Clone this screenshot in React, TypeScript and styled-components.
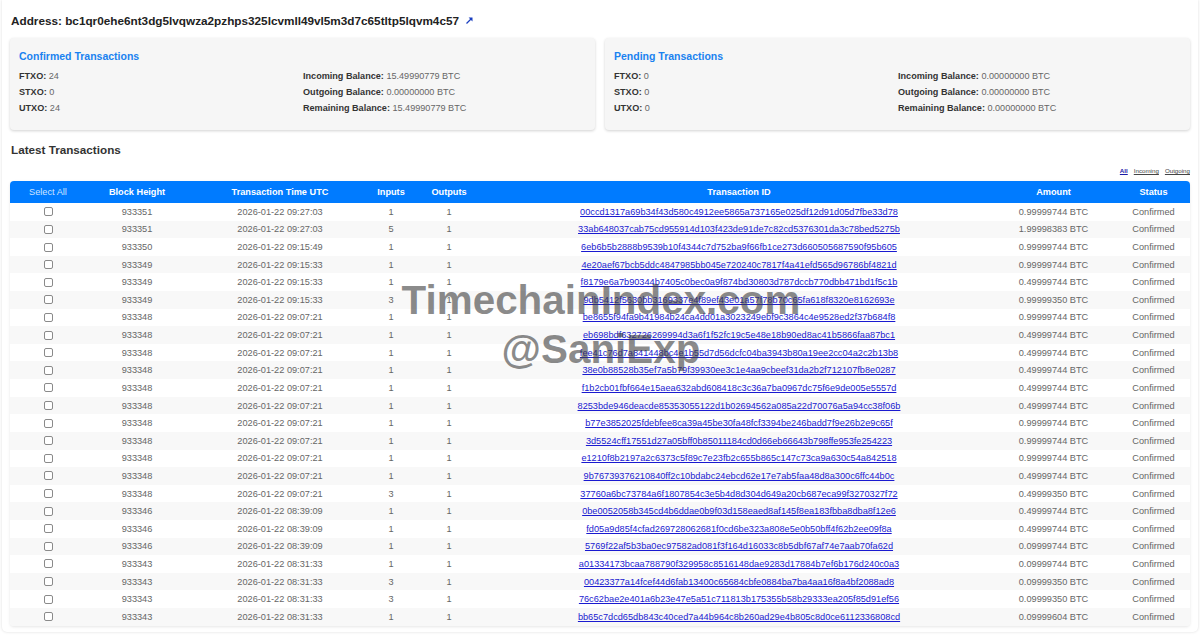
import styled, { createGlobalStyle } from "styled-components";

const GlobalStyle = createGlobalStyle`
  html, body {
    margin: 0;
    padding: 0;
    background: #ffffff;
    font-family: "Liberation Sans", Arial, sans-serif;
  }
`;

const Page = styled.div`
  position: relative;
  box-sizing: border-box;
  width: 1200px;
  height: 637px;
  padding: 0 2px;
  overflow: hidden;
`;

const Panel = styled.main`
  box-sizing: border-box;
  height: 632px;
  padding: 13px 8px 0;
  background: #ffffff;
  border-radius: 0 0 5px 5px;
  box-shadow: 0 0 3px rgba(0, 0, 0, 0.14);
`;

const AddressTitle = styled.h2`
  display: flex;
  align-items: center;
  gap: 6px;
  height: 14px;
  margin: 0 0 11px;
  padding-left: 1px;
  font-size: 11.75px;
  font-weight: 700;
  color: #222222;
`;

const Cards = styled.div`
  display: grid;
  grid-template-columns: 585px 585px;
  gap: 10px;
`;

const Card = styled.section`
  box-sizing: border-box;
  height: 92px;
  padding: 12px 9px;
  background: #f6f6f6;
  border-radius: 4px;
  box-shadow: 0 1px 3px rgba(0, 0, 0, 0.18);
`;

const CardTitle = styled.h3`
  margin: 0 0 5px;
  font-size: 10.5px;
  line-height: 13px;
  font-weight: 700;
  color: #1a82f0;
`;

const CardGrid = styled.div`
  display: grid;
  grid-template-columns: 284px 1fr;
  grid-auto-rows: 16px;
  align-items: center;
  font-size: 9.1px;
  color: #666666;

  b {
    color: #333333;
  }
`;

const SectionHead = styled.h2`
  margin: 13px 0 0 1px;
  font-size: 11.7px;
  line-height: 14px;
  font-weight: 700;
  color: #333333;
`;

const Filters = styled.div`
  display: flex;
  justify-content: flex-end;
  gap: 6px;
  height: 11px;
  margin-top: 8px;
  font-size: 6.2px;
  line-height: 11px;
`;

const FilterLink = styled.a<{ $active?: boolean }>`
  color: ${(props) => (props.$active ? "#1a1aa6" : "#444444")};
  font-weight: ${(props) => (props.$active ? 700 : 400)};
  text-decoration: underline;
`;

const TableBox = styled.div`
  width: 1180px;
  margin-top: 5px;
  border-radius: 4px;
  overflow: hidden;
  box-shadow: 0 1px 3px rgba(0, 0, 0, 0.1);
`;

const Table = styled.table`
  width: 100%;
  table-layout: fixed;
  border-collapse: separate;
  border-spacing: 0;
  font-size: 9.2px;
`;

const HeadCell = styled.th<{ $light?: boolean }>`
  height: 22px;
  padding: 0;
  background: #007bff;
  color: ${(props) => (props.$light ? "#cfe4ff" : "#ffffff")};
  font-weight: ${(props) => (props.$light ? 400 : 700)};
  text-align: center;
`;

const Row = styled.tr`
  &:nth-child(even) td {
    background: #f8f8f8;
  }
`;

const Cell = styled.td`
  height: 17.62px;
  padding: 0;
  text-align: center;
  color: #666666;
`;

const Check = styled.input`
  display: block;
  width: 9px;
  height: 9px;
  margin: 0 auto;
  appearance: none;
  background: #ffffff;
  border: 1px solid #8a8a8a;
  border-radius: 2px;
`;

const TxLink = styled.a`
  color: #1a1ad0;
  text-decoration: underline;
`;

const Watermark = styled.div`
  position: absolute;
  left: 401px;
  top: 276px;
  width: 400px;
  text-align: center;
  font-size: 40.4px;
  line-height: 49px;
  font-weight: 700;
  color: rgba(60, 60, 60, 0.6);
  pointer-events: none;
`;

const columns = [76, 102, 184, 38, 78, 502, 127, 73];

const rows: [string, string, number, string, string][] = [
  ["933351", "09:27:03", 1, "00ccd1317a69b34f43d580c4912ee5865a737165e025df12d91d05d7fbe33d78", "0.99999744"],
  ["933351", "09:27:03", 5, "33ab648037cab75cd955914d103f423de91de7c82cd5376301da3c78bed5275b", "1.99998383"],
  ["933350", "09:15:49", 1, "6eb6b5b2888b9539b10f4344c7d752ba9f66fb1ce273d660505687590f95b605", "0.99999744"],
  ["933349", "09:15:33", 1, "4e20aef67bcb5ddc4847985bb045e720240c7817f4a41efd565d96786bf4821d", "0.99999744"],
  ["933349", "09:15:33", 1, "f8179e6a7b90344b7405c0bec0a9f874bd30803d787dccb770dbb471bd1f5c1b", "0.49999744"],
  ["933349", "09:15:33", 3, "9db5412f5630bb3169337e4f89ef43e01a57f78b70c65fa618f8320e8162693e", "0.99999350"],
  ["933348", "09:07:21", 1, "be8655f94fa9b41984b24ca4dd01a3023249ebf9c3864c4e9528ed2f37b684f8", "0.99999744"],
  ["933348", "09:07:21", 1, "eb698bdf632726269994d3a6f1f52fc19c5e48e18b90ed8ac41b5866faa87bc1", "0.49999744"],
  ["933348", "09:07:21", 1, "fee41c76d7a841448bc4e1b55d7d56dcfc04ba3943b80a19ee2cc04a2c2b13b8", "0.49999744"],
  ["933348", "09:07:21", 1, "38e0b88528b35ef7a5b79f39930ee3c1e4aa9cbeef31da2b2f712107fb8e0287", "0.49999744"],
  ["933348", "09:07:21", 1, "f1b2cb01fbf664e15aea632abd608418c3c36a7ba0967dc75f6e9de005e5557d", "0.49999744"],
  ["933348", "09:07:21", 1, "8253bde946deacde85353055122d1b02694562a085a22d70076a5a94cc38f06b", "0.49999744"],
  ["933348", "09:07:21", 1, "b77e3852025fdebfee8ca39a45be30fa48fcf3394be246badd7f9e26b2e9c65f", "0.99999744"],
  ["933348", "09:07:21", 1, "3d5524cff17551d27a05bff0b85011184cd0d66eb66643b798ffe953fe254223", "0.99999744"],
  ["933348", "09:07:21", 1, "e1210f8b2197a2c6373c5f89c7e23fb2c655b865c147c73ca9a630c54a842518", "0.99999744"],
  ["933348", "09:07:21", 1, "9b76739376210840ff2c10bdabc24ebcd62e17e7ab5faa48d8a300c6ffc44b0c", "0.49999744"],
  ["933348", "09:07:21", 3, "37760a6bc73784a6f1807854c3e5b4d8d304d649a20cb687eca99f3270327f72", "0.49999350"],
  ["933346", "08:39:09", 1, "0be0052058b345cd4b6ddae0b9f03d158eaed8af145f8ea183fbba8dba8f12e6", "0.49999744"],
  ["933346", "08:39:09", 1, "fd05a9d85f4cfad269728062681f0cd6be323a808e5e0b50bff4f62b2ee09f8a", "0.49999744"],
  ["933346", "08:39:09", 1, "5769f22af5b3ba0ec97582ad081f3f164d16033c8b5dbf67af74e7aab70fa62d", "0.09999744"],
  ["933343", "08:31:33", 1, "a01334173bcaa788790f329958c8516148dae9283d17884b7ef6b176d240c0a3", "0.09999744"],
  ["933343", "08:31:33", 3, "00423377a14fcef44d6fab13400c65684cbfe0884ba7ba4aa16f8a4bf2088ad8", "0.09999350"],
  ["933343", "08:31:33", 3, "76c62bae2e401a6b23e47e5a51c711813b175355b58b29333ea205f85d91ef56", "0.09999350"],
  ["933343", "08:31:33", 1, "bb65c7dcd65db843c40ced7a44b964c8b260ad29e4b805c8d0ce6112336808cd", "0.09999604"],
];

const BalanceCard = ({ title, counts, balances }: { title: string; counts: string[]; balances: string[] }) => (
  <Card>
    <CardTitle>{title}</CardTitle>
    <CardGrid>
      <div><b>FTXO:</b> {counts[0]}</div>
      <div><b>Incoming Balance:</b> {balances[0]} BTC</div>
      <div><b>STXO:</b> {counts[1]}</div>
      <div><b>Outgoing Balance:</b> {balances[1]} BTC</div>
      <div><b>UTXO:</b> {counts[2]}</div>
      <div><b>Remaining Balance:</b> {balances[2]} BTC</div>
    </CardGrid>
  </Card>
);

export default function App() {
  return (
    <Page>
      <GlobalStyle />
      <Panel>
        <AddressTitle>
          Address: bc1qr0ehe6nt3dg5lvqwza2pzhps325lcvmll49vl5m3d7c65tltp5lqvm4c57
          <svg width="9" height="9" viewBox="0 0 9 9">
            <path d="M1.5 7.5 L6.5 2.5" stroke="#1a3fc0" strokeWidth="1.3" />
            <path d="M3.6 1.5 H7.5 V5.4 Z" fill="#1a3fc0" />
          </svg>
        </AddressTitle>
        <Cards>
          <BalanceCard
            title="Confirmed Transactions"
            counts={["24", "0", "24"]}
            balances={["15.49990779", "0.00000000", "15.49990779"]}
          />
          <BalanceCard
            title="Pending Transactions"
            counts={["0", "0", "0"]}
            balances={["0.00000000", "0.00000000", "0.00000000"]}
          />
        </Cards>
        <SectionHead>Latest Transactions</SectionHead>
        <Filters>
          <FilterLink $active>All</FilterLink>
          <FilterLink>Incoming</FilterLink>
          <FilterLink>Outgoing</FilterLink>
        </Filters>
        <TableBox>
          <Table>
            <colgroup>
              {columns.map((width, i) => (
                <col key={i} width={width} />
              ))}
            </colgroup>
            <thead>
              <tr>
                <HeadCell $light>Select All</HeadCell>
                <HeadCell>Block Height</HeadCell>
                <HeadCell>Transaction Time UTC</HeadCell>
                <HeadCell>Inputs</HeadCell>
                <HeadCell>Outputs</HeadCell>
                <HeadCell>Transaction ID</HeadCell>
                <HeadCell>Amount</HeadCell>
                <HeadCell>Status</HeadCell>
              </tr>
            </thead>
            <tbody>
              {rows.map(([block, time, inputs, txid, amount]) => (
                <Row key={txid}>
                  <Cell><Check type="checkbox" /></Cell>
                  <Cell>{block}</Cell>
                  <Cell>2026-01-22 {time}</Cell>
                  <Cell>{inputs}</Cell>
                  <Cell>1</Cell>
                  <Cell><TxLink>{txid}</TxLink></Cell>
                  <Cell>{amount} BTC</Cell>
                  <Cell>Confirmed</Cell>
                </Row>
              ))}
            </tbody>
          </Table>
        </TableBox>
      </Panel>
      <Watermark>
        TimechainIndex.com
        <br />
        @SaniExp
      </Watermark>
    </Page>
  );
}
